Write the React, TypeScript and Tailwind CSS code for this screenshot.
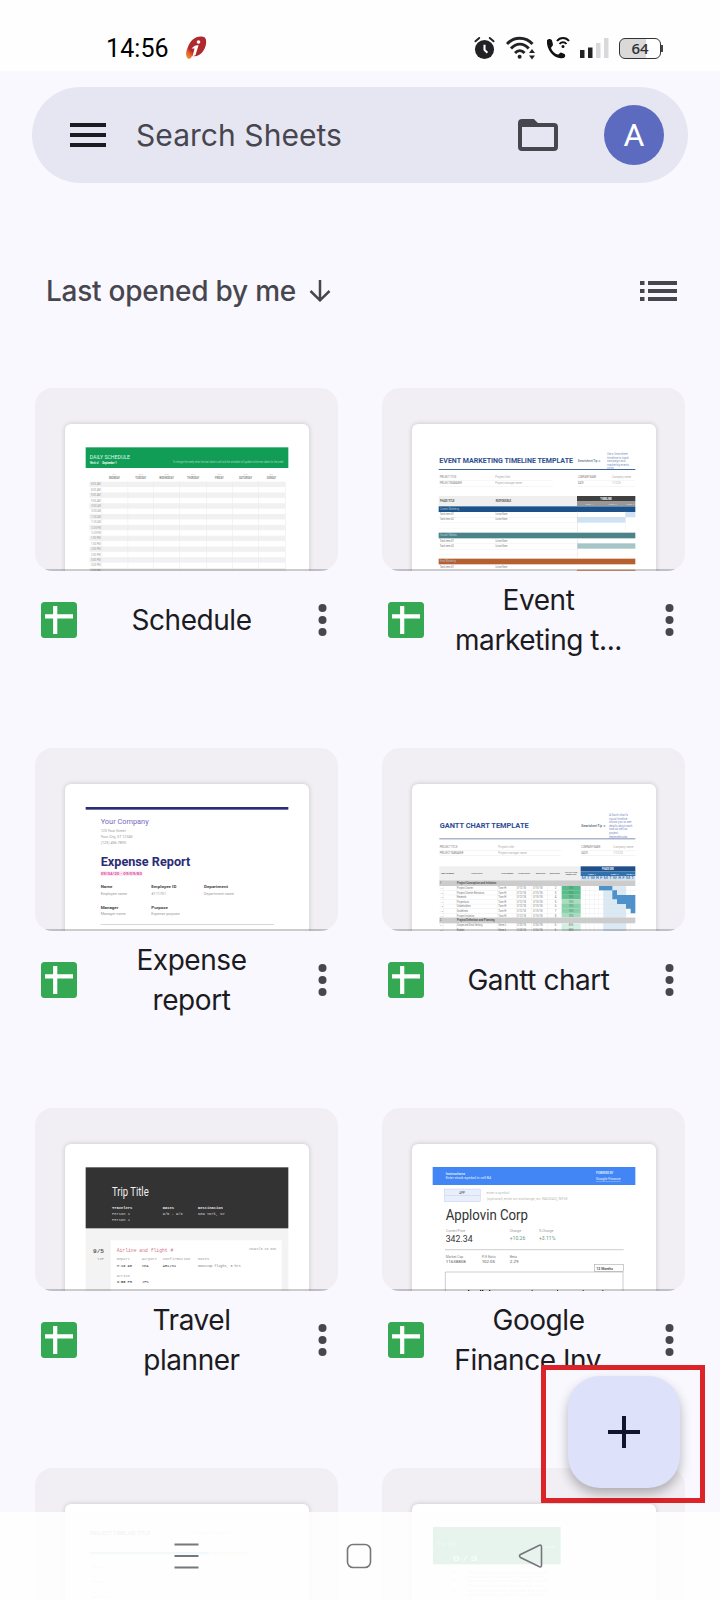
import React from 'react';

type TxProps = {
  x: number;
  y: number;
  w: number;
  s: number;
  fill?: string;
  bold?: boolean;
  mono?: boolean;
  children: React.ReactNode;
};

function Tx({ x, y, w, s, fill = '#777', bold, mono, children }: TxProps) {
  return (
    <text
      x={x}
      y={y}
      textLength={w}
      lengthAdjust="spacingAndGlyphs"
      fontSize={s}
      fill={fill}
      fontWeight={bold ? 700 : 400}
      fontFamily={mono ? 'Liberation Mono, monospace' : 'Roboto, sans-serif'}
    >
      {children}
    </text>
  );
}

const R = (p: { x: number; y: number; w: number; h: number; f: string; o?: number }) => (
  <rect x={p.x} y={p.y} width={p.w} height={p.h} fill={p.f} opacity={p.o} />
);

function ScheduleThumb() {
  const days: [number, number, string][] = [
    [235, 33, 'MONDAY'], [314, 32, 'TUESDAY'], [386, 43, 'WEDNESDAY'], [469, 37, 'THURSDAY'],
    [553, 26, 'FRIDAY'], [625, 39, 'SATURDAY'], [708, 28, 'SUNDAY'],
  ];
  const times = ['8:00 AM', '8:30 AM', '9:00 AM', '9:30 AM', '10:00 AM', '10:30 AM', '11:00 AM', '11:30 AM', '12:00 PM', '12:30 PM', '1:00 PM', '1:30 PM', '2:00 PM', '2:30 PM', '3:00 PM', '3:30 PM', '4:00 PM'];
  return (
    <>
      <R x={165} y={201} w={608} h={62} f="#129d57" />
      <Tx x={177} y={236} w={121} s={15} fill="#d9fae8">DAILY SCHEDULE</Tx>
      <Tx x={178} y={250} w={26} s={8} fill="#d5f5e3" bold>Week of</Tx>
      <Tx x={215} y={250} w={43} s={8} fill="#fff" bold>September 1</Tx>
      <Tx x={426} y={249} w={332} s={8} fill="#9fdcbb">To change the week, enter the start date in cell and the schedule will update to the new dates for the week</Tx>
      {days.map(([x, w, d], i) => (
        <g key={d}>
          <Tx x={x + w / 2 - 6} y={284} w={12} s={6} fill="#aaa">9/{i + 1}</Tx>
          <Tx x={x} y={297} w={w} s={8} fill="#888" bold>{d}</Tx>
        </g>
      ))}
      {times.map((t, i) => (
        <g key={t}>
          {i % 2 === 0 && <R x={176} y={304 + i * 16.2} w={587} h={16} f="#f1f1f1" />}
          <Tx x={181} y={315 + i * 16.2} w={29} s={8} fill="#999">{t}</Tx>
        </g>
      ))}
      {[213, 291, 368, 446, 526, 604, 683, 763].map((x) => <R key={x} x={x} y={304} w={1.5} h={268} f="#e9e9e9" />)}
    </>
  );
}

function EventThumb() {
  return (
    <>
      <Tx x={190} y={249} w={401} s={21} fill="#2f4f8f" bold>EVENT MARKETING TIMELINE TEMPLATE</Tx>
      <Tx x={605} y={244} w={70} s={9} fill="#789" bold>Smartsheet Tip ➜</Tx>
      {['Use a Smartsheet', 'timeline to track', 'campaign and', 'marketing events', 'online'].map((t, i) => (
        <Tx key={t} x={693} y={225 + i * 10.3} w={[62, 65, 55, 66, 20][i]} s={8} fill="#7f92b8">{t}</Tx>
      ))}
      <R x={188} y={266} w={590} h={3} f="#3d6598" />
      <Tx x={191} y={294} w={50} s={8}>PROJECT TITLE</Tx>
      <Tx x={191} y={310} w={66} s={8}>PROJECT MANAGER</Tx>
      <Tx x={358} y={294} w={44} s={8} fill="#aaa">Project title</Tx>
      <Tx x={358} y={310} w={80} s={8} fill="#aaa">Project manager name</Tx>
      <Tx x={606} y={294} w={54} s={8}>COMPANY NAME</Tx>
      <Tx x={606} y={310} w={17} s={8}>DATE</Tx>
      <Tx x={708} y={294} w={57} s={8} fill="#aaa">Company name</Tx>
      <Tx x={708} y={310} w={26} s={8} fill="#aaa">1/12/25</Tx>
      {[300, 317].map((y) => <g key={y}><R x={190} y={y} w={340} h={1} f="#e4e4e4" /><R x={604} y={y} w={172} h={1} f="#e4e4e4" /></g>)}
      <R x={188} y={347} w={415} h={30} f="#efefef" />
      <R x={603} y={347} w={175} h={15} f="#404040" />
      <R x={603} y={362} w={175} h={15} f="#989898" />
      <Tx x={192} y={365} w={43} s={8} fill="#555" bold>PHASE TITLE</Tx>
      <Tx x={359} y={365} w={46} s={8} fill="#555" bold>RESPONSIBLE</Tx>
      <Tx x={673} y={358} w={34} s={8} fill="#fff" bold>TIMELINE</Tx>
      <Tx x={627} y={373} w={25} s={7} fill="#ddd">WEEK 1</Tx>
      <Tx x={697} y={373} w={25} s={7} fill="#ddd">WEEK 2</Tx>
      <Tx x={751} y={373} w={23} s={7} fill="#ddd">WEEK 3</Tx>
      <R x={748} y={394} w={30} h={17} f="#cfe2f3" />
      <R x={603} y={410} w={145} h={17} f="#cfe2f3" />
      <R x={603} y={489} w={175} h={16} f="#a6c5c6" />
      <R x={603} y={568} w={175} h={6} f="#e5a77d" />
      {([[378, 17, '#1c5289', 'Content Marketing', 57], [457, 17, '#4b8488', 'Social Media', 50], [535, 17, '#b66030', 'Email Marketing', 48]] as const).map(([y, h, f, t, w]) => (
        <g key={y}>
          <R x={188} y={y} w={590} h={h} f={f} />
          <Tx x={192} y={y + 11} w={w} s={8} fill="#b4c6da">{t}</Tx>
          <Tx x={191} y={y + 27} w={43} s={8}>Task item #1</Tx>
          <Tx x={358} y={y + 27} w={36} s={8}>Contact Name</Tx>
          {y < 500 && (
            <>
              <Tx x={191} y={y + 42} w={43} s={8}>Task item #2</Tx>
              <Tx x={358} y={y + 42} w={36} s={8}>Contact Name</Tx>
              <R x={188} y={y + 32} w={415} h={1} f="#e6e6e6" />
              <R x={188} y={y + 49} w={415} h={1} f="#e6e6e6" />
              <R x={188} y={y + 65} w={415} h={1} f="#eeeeee" />
            </>
          )}
        </g>
      ))}
      {[[394, 63], [474, 61]].map(([y, h]) => <R key={y} x={603} y={y} w={1.5} h={h} f="#dcdcdc" />)}
      <R x={748} y={394} w={1} h={56} f="#e4e4e4" />
    </>
  );
}

function ExpenseThumb() {
  return (
    <>
      <R x={165} y={200} w={608} h={8} f="#2c2c76" />
      <Tx x={210} y={252} w={144} s={23} fill="#7469bd">Your Company</Tx>
      <Tx x={210} y={274} w={75} s={11} fill="#999">123 Your Street</Tx>
      <Tx x={210} y={292} w={96} s={11} fill="#999">Your City, ST 12345</Tx>
      <Tx x={210} y={311} w={76} s={11} fill="#999">(123) 456-7890</Tx>
      <Tx x={210} y={377} w={269} s={37} fill="#2c2c76" bold>Expense Report</Tx>
      <R x={210} y={393} w={125} h={14} f="#fde8f3" />
      <Tx x={210} y={405} w={124} s={12} fill="#e0559f" bold>09/04/20 - 09/09/80</Tx>
      <Tx x={210} y={444} w={35} s={12} fill="#444" bold>Name</Tx>
      <Tx x={362} y={444} w={75} s={12} fill="#444" bold>Employee ID</Tx>
      <Tx x={520} y={444} w={72} s={12} fill="#444" bold>Department</Tx>
      <Tx x={210} y={464} w={79} s={11} fill="#999">Employee name</Tx>
      <Tx x={362} y={464} w={44} s={11} fill="#999">#111701</Tx>
      <Tx x={520} y={464} w={90} s={11} fill="#999">Department name</Tx>
      <Tx x={210} y={506} w={53} s={12} fill="#444" bold>Manager</Tx>
      <Tx x={362} y={506} w={50} s={12} fill="#444" bold>Purpose</Tx>
      <Tx x={210} y={525} w={75} s={11} fill="#999">Manager name</Tx>
      <Tx x={362} y={525} w={85} s={11} fill="#999">Expense purpose</Tx>
      <R x={210} y={551} w={520} h={2.5} f="#d0d0d0" />
    </>
  );
}

function GanttThumb() {
  const tasks = ['Project Charter', 'Project Charter Revisions', 'Research', 'Projections', 'Stakeholders', 'Guidelines', 'Project Initiation'];
  const tw = [48, 82, 28, 36, 41, 33, 52];
  const g = ['#57bb8a', '#57bb8a', '#65c092', '#a9dcc0', '#8ad1aa', '#8ad1aa', '#a8dcc1'];
  return (
    <>
      <Tx x={191} y={264} w={267} s={23} fill="#2c4d95" bold>GANTT CHART TEMPLATE</Tx>
      <Tx x={616} y={259} w={73} s={9} fill="#678" bold>Smartsheet Tip ➜</Tx>
      {['A Gantt chart’s', 'visual timeline', 'allows you to see', 'details about each', 'task as well as', 'project', 'dependencies'].map((t, i) => (
        <Tx key={t} x={699} y={227 + i * 10.8} w={[57, 55, 67, 70, 55, 27, 55][i]} s={9} fill="#7f90c4">{t}</Tx>
      ))}
      <R x={190} y={294} w={588} h={3} f="#8090b5" />
      <Tx x={191} y={323} w={53} s={8}>PROJECT TITLE</Tx>
      <Tx x={191} y={340} w={71} s={8}>PROJECT MANAGER</Tx>
      <Tx x={367} y={323} w={47} s={8} fill="#aaa">Project's title</Tx>
      <Tx x={367} y={340} w={85} s={8} fill="#aaa">Project manager name</Tx>
      <Tx x={616} y={323} w={57} s={8}>COMPANY NAME</Tx>
      <Tx x={616} y={340} w={19} s={8}>DATE</Tx>
      <Tx x={712} y={323} w={60} s={8} fill="#aaa">Company name</Tx>
      <Tx x={712} y={340} w={28} s={8} fill="#aaa">1/12/25</Tx>
      {[329, 346].map((y) => <g key={y}><R x={190} y={y} w={364} h={1} f="#ddd" /><R x={616} y={y} w={162} h={1} f="#ddd" /></g>)}
      <R x={190} y={378} w={424} h={42} f="#efefef" />
      {([[196, 38, 'WBS NUMBER'], [286, 33, 'TASK TITLE'], [376, 36, 'TASK OWNER'], [427, 35, 'START DATE'], [480, 28, 'DUE DATE'], [521, 30, 'DURATION']] as const).map(([x, w, t]) => (
        <Tx key={t} x={x} y={402} w={w} s={7} fill="#555" bold>{t}</Tx>
      ))}
      <Tx x={567} y={397} w={37} s={7} fill="#555" bold>PCT OF TASK</Tx>
      <Tx x={569} y={405} w={32} s={7} fill="#555" bold>COMPLETE</Tx>
      <R x={614} y={378} w={164} h={15} f="#204e88" />
      <R x={614} y={393} w={164} h={14} f="#3271aa" />
      <R x={614} y={407} w={164} h={13} f="#cfe2f3" />
      <Tx x={678} y={389} w={35} s={8} fill="#fff" bold>PHASE ONE</Tx>
      {[636, 704, 751].map((x, i) => <Tx key={x} x={x} y={403} w={24} s={7} fill="#fff">WEEK {i + 1}</Tx>)}
      <Tx x={617} y={417} w={157} s={8} fill="#2d5e94">M T W R F M T W R F M T</Tx>
      <R x={682} y={437} w={68} h={135} f="#dbe9f5" />
      {tasks.map((t, i) => {
        const y = 447 + i * 13.6;
        return (
          <g key={t}>
            <R x={557} y={y - 11} w={57} h={14} f={g[i]} />
            <Tx x={193} y={y} w={8} s={7}>1.{i + 1}</Tx>
            <Tx x={243} y={y} w={tw[i]} s={8}>{t}</Tx>
            <Tx x={367} y={y} w={26} s={8}>Tom H.</Tx>
            <Tx x={423} y={y} w={27} s={8}>3/12/18</Tx>
            <Tx x={471} y={y} w={28} s={8}>3/15/18</Tx>
            <Tx x={536} y={y} w={5} s={8}>{i + 2}</Tx>
            <Tx x={578} y={y} w={14} s={8} fill="#4f8468">100%</Tx>
            <R x={190} y={y + 3} w={588} h={0.8} f="#dcdcdc" />
          </g>
        );
      })}
      {[628, 641, 655, 668, 682, 696, 709, 723, 736, 750, 764].map((x) => <R key={x} x={x} y={437} w={0.8} h={135} f="#e2e6ea" />)}
      {[203, 240, 364, 420, 467, 514].map((x) => <R key={x} x={x} y={437} w={0.8} h={135} f="#ddd" />)}
      <R x={669} y={437} w={40} h={13} f="#4e91cb" />
      <path d="M709 450h14v14h55v55h-14v-14h-14v-14h-27v-14h-14z" fill="#4e91cb" />
      <R x={190} y={420} w={588} h={17} f="#cccccc" />
      <R x={190} y={532} w={588} h={17} f="#cccccc" />
      <Tx x={192} y={431} w={4} s={8} fill="#333">1</Tx>
      <Tx x={243} y={431} w={118} s={9} fill="#555" bold>Project Conception and Initiation</Tx>
      <Tx x={192} y={543} w={4} s={8} fill="#333">2</Tx>
      <Tx x={243} y={543} w={113} s={9} fill="#555" bold>Project Definition and Planning</Tx>
      {[558, 571].map((y) => (
        <g key={y}>
          <R x={557} y={y - 9} w={57} h={14} f="#d4efe1" />
          <Tx x={193} y={y} w={8} s={7}>2.1</Tx>
          <Tx x={243} y={y} w={y === 558 ? 76 : 22} s={8}>{y === 558 ? 'Scope and Goal Setting' : 'Budget'}</Tx>
          <Tx x={367} y={y} w={26} s={8}>Steve L.</Tx>
          <Tx x={423} y={y} w={27} s={8}>3/20/18</Tx>
          <Tx x={471} y={y} w={28} s={8}>3/26/18</Tx>
          <Tx x={536} y={y} w={5} s={8}>6</Tx>
          <Tx x={578} y={y} w={14} s={8}>80%</Tx>
        </g>
      ))}
    </>
  );
}

function TravelThumb() {
  return (
    <>
      <R x={165} y={384} w={608} h={190} f="#f3f3f3" />
      <R x={165} y={201} w={608} h={183} f="#333333" />
      <Tx x={244} y={286} w={110} s={41} fill="#f2f2f2">Trip Title</Tx>
      <Tx mono bold x={244} y={325} w={61} s={12} fill="#eee">Travelers</Tx>
      <Tx mono x={244} y={344} w={54} s={11} fill="#ddd">Person 1</Tx>
      <Tx mono x={244} y={363} w={54} s={11} fill="#ddd">Person 2</Tx>
      <Tx mono bold x={396} y={325} w={34} s={12} fill="#eee">Dates</Tx>
      <Tx mono x={396} y={344} w={60} s={11} fill="#ddd">9/5 - 9/8</Tx>
      <Tx mono bold x={502} y={325} w={74} s={12} fill="#eee">Destination</Tx>
      <Tx mono x={502} y={344} w={80} s={11} fill="#ddd">New York, NY</Tx>
      <R x={240} y={420} w={513} h={154} f="#ffffff" />
      <Tx mono bold x={187} y={457} w={33} s={18} fill="#555">9/5</Tx>
      <Tx mono x={200} y={479} w={19} s={10} fill="#999">TUE</Tx>
      <Tx mono x={258} y={454} w={170} s={15} fill="#d47688">Airline and flight #</Tx>
      <Tx mono x={655} y={449} w={82} s={10} fill="#888">Seattle to NYC</Tx>
      <Tx mono x={258} y={479} w={40} s={10} fill="#999">Depart</Tx>
      <Tx mono x={333} y={479} w={46} s={10} fill="#999">Airport</Tx>
      <Tx mono x={396} y={479} w={83} s={10} fill="#999">Confirmation</Tx>
      <Tx mono x={502} y={479} w={34} s={10} fill="#999">Notes</Tx>
      <Tx mono bold x={258} y={499} w={46} s={11} fill="#555">7:10 AM</Tx>
      <Tx mono x={333} y={499} w={21} s={11} fill="#444">SEA</Tx>
      <Tx mono x={396} y={499} w={40} s={11} fill="#444">AB1234</Tx>
      <Tx mono x={502} y={499} w={128} s={11} fill="#777">Nonstop flight, 5 hrs</Tx>
      <Tx mono x={258} y={530} w={40} s={10} fill="#999">Arrive</Tx>
      <Tx mono bold x={258} y={549} w={46} s={11} fill="#555">3:55 PM</Tx>
      <Tx mono x={334} y={549} w={20} s={11} fill="#444">JFK</Tx>
    </>
  );
}

function FinanceThumb() {
  return (
    <>
      <R x={170} y={200} w={608} h={54} f="#4285f4" />
      <Tx x={209} y={224} w={58} s={10} fill="#dbe8ff" bold>Instructions</Tx>
      <Tx x={209} y={237} w={136} s={10} fill="#e6efff">Enter stock symbol in cell B4</Tx>
      <Tx x={660} y={221} w={52} s={9} fill="#dbe8ff" bold>POWERED BY</Tx>
      <Tx x={660} y={240} w={74} s={11} fill="#e6efff">Google Finance</Tx>
      <R x={660} y={242} w={74} h={1} f="#dbe8ff" />
      <rect x={205} y={266} width={108} height={38} fill="#e8eefb" stroke="#b0bedf" />
      <R x={205} y={285} w={108} h={1} f="#b0bedf" />
      <Tx x={250} y={281} w={17} s={9} fill="#444">APP</Tx>
      <Tx x={318} y={280} w={82} s={9} fill="#bbb">← enter a symbol</Tx>
      <Tx x={318} y={298} w={257} s={9} fill="#bbb">← (optional) enter an exchange, ex: NASDAQ, NYSE</Tx>
      <Tx x={209} y={359} w={247} s={43} fill="#333">Applovin Corp</Tx>
      <Tx x={210} y={394} w={57} s={9} fill="#999">Current Price</Tx>
      <Tx x={401} y={394} w={34} s={9} fill="#999">Change</Tx>
      <Tx x={489} y={394} w={43} s={9} fill="#999">% Change</Tx>
      <Tx x={209} y={425} w={81} s={28} fill="#333">342.34</Tx>
      <Tx x={401} y={420} w={47} s={14} fill="#6b9a7d">+10.26</Tx>
      <Tx x={489} y={420} w={49} s={14} fill="#6b9a7d">+3.11%</Tx>
      <R x={207} y={447} w={536} h={2.5} f="#c4c4c4" />
      <Tx x={209} y={472} w={53} s={9} fill="#888">Market Cap</Tx>
      <Tx x={317} y={472} w={42} s={9} fill="#888">P/E Ratio</Tx>
      <Tx x={401} y={472} w={22} s={9} fill="#888">Beta</Tx>
      <Tx x={209} y={489} w={60} s={13} fill="#555">11638808</Tx>
      <Tx x={317} y={489} w={40} s={13} fill="#555">102.05</Tx>
      <Tx x={401} y={489} w={27} s={13} fill="#555">2.29</Tx>
      <rect x={655} y={493} width={88} height={21} fill="#fff" stroke="#999" strokeWidth={1.5} />
      <Tx x={661} y={508} w={50} s={11} fill="#555" bold>12 Months</Tx>
      <path d="M208 575V515H741V575" fill="none" stroke="#999" strokeWidth={1.5} />
      {[276, 312, 318, 339, 467, 543, 620, 679].map((x, i) => <R key={x} x={x} y={569} w={i < 4 ? 4 : 3} h={6} f="#333" />)}
    </>
  );
}

function TimelineThumb() {
  return (
    <>
      <Tx x={178} y={223} w={180} s={15} fill="#999" bold>PROJECT TIMELINE TITLE</Tx>
      <Tx x={475} y={221} w={130} s={12} fill="#ccc">Company name</Tx>
      <R x={178} y={275} w={237} h={7} f="#a9cdd6" />
      <R x={415} y={275} w={120} h={7} f="#8dbfe0" />
      <R x={535} y={275} w={118} h={7} f="#f0dcc0" />
      {[305, 350, 395].map((y) => (
        <g key={y}><R x={178} y={y} w={475} h={2} f="#e6e6e6" /><Tx x={178} y={y + 18} w={50} s={11} fill="#ccc">Task item</Tx></g>
      ))}
      {[440, 510, 580].map((x) => <R key={x} x={x} y={283} w={2} h={150} f="#e6e6e6" />)}
    </>
  );
}

function ListThumb() {
  return (
    <>
      <R x={171} y={200} w={383} h={112} f="#129d57" />
      <Tx x={181} y={256} w={64} s={24} fill="#63bd8e">To-do</Tx>
      <Tx x={230} y={302} w={75} s={22} fill="#a8e0c2" bold>0 / 3</Tx>
      <Tx x={470} y={262} w={65} s={10} fill="#8fd5ab">completed</Tx>
      {[340, 366, 394].map((y) => (
        <g key={y}>
          <rect x={186} y={y - 10} width={12} height={12} fill="none" stroke="#ccc" />
          <Tx x={227} y={y} w={12} s={10} fill="#bbb">9/5</Tx>
          <Tx x={273} y={y} w={240} s={11} fill="#bbb">Task description to complete this week</Tx>
          <Tx x={273} y={y + 13} w={230} s={11} fill="#ccc">Additional notes about this task item</Tx>
        </g>
      ))}
    </>
  );
}

function SheetIcon() {
  return (
    <svg className="h-9 w-9 shrink-0" viewBox="0 0 36 36">
      <rect width="36" height="36" rx="3.5" fill="#34a853" />
      <path d="M4 14.400h28M14.200 4v28" stroke="#fff" strokeWidth="4.200" />
    </svg>
  );
}

function FileCard({ lines = [], thumb, right }: { lines?: string[]; thumb: React.ReactNode; right?: boolean }) {
  return (
    <article className="flex h-[360px] flex-col">
      <div className="relative flex h-[183px] shrink-0 justify-center overflow-hidden rounded-[18px] bg-[#f1eff4] pt-[36px]">
        <div className="h-[160px] w-[244px] rounded-t-[6px] bg-white shadow-[0_0_5px_rgba(0,0,0,0.18)]">
          <svg className="block h-[147px] w-[244px]" viewBox={right ? '108 131 732 441' : '103 131 732 441'}>{thumb}</svg>
        </div>
        <div className="absolute inset-x-0 bottom-0 h-[2px] bg-black/20" />
      </div>
      {lines.length > 0 && (
        <div className="flex h-[98px] items-center pl-[6px] pr-[11px]">
          <SheetIcon />
          <h2 className="min-w-0 flex-1 whitespace-nowrap pr-[12px] text-center font-[Inter,sans-serif] text-[28px] font-normal leading-[40px] tracking-[-0.45px] text-[#1b1b21]">
            {lines.map((l) => <span key={l} className="block">{l}</span>)}
          </h2>
          <svg className="h-8 w-[9px] shrink-0" viewBox="0 0 9 32" fill="#47464f">
            <circle cx="4.500" cy="4" r="4" /><circle cx="4.500" cy="16" r="4" /><circle cx="4.500" cy="28" r="4" />
          </svg>
        </div>
      )}
    </article>
  );
}

function StatusBar() {
  return (
    <div className="flex h-[71px] shrink-0 items-center bg-[#fefefe] pl-[106px] pr-[57px] pt-[25px]">
      <span className="w-[64px] whitespace-nowrap font-[Roboto,sans-serif] text-[25px] leading-none tracking-[0.1px] text-black">14:56</span>
      <svg className="ml-[15px] h-[24px] w-[22px]" viewBox="0 0 22 24">
        <defs>
          <linearGradient id="brand" x1="0" y1="1" x2="0.6" y2="0.3">
            <stop offset="0" stopColor="#f6a02d" /><stop offset="0.3" stopColor="#e8602c" /><stop offset="0.5" stopColor="#ae282e" />
          </linearGradient>
        </defs>
        <path d="M18 .8C12-1 5 4 3 11C1 15 0 20 3 22.500C5 23.500 6 22 7 20C14 22 20 15 21 8C21.500 4 21 1.500 18 .8Z" fill="url(#brand)" />
        <circle cx="13.500" cy="6" r="1.800" fill="#fff" />
        <path d="M6.500 12.500C9 9.500 12 8.500 13.500 9.500L10.500 19L7.500 20.500L9.500 12.500Z" fill="#fff" />
      </svg>
      <div className="ml-auto flex items-center">
        <svg className="h-6 w-[21px]" viewBox="0 0 22 24">
          <circle cx="11" cy="13.500" r="10" fill="#222226" />
          <path d="M1.500 5L5.500 1.500M20.500 5L16.500 1.500" stroke="#222226" strokeWidth="2" strokeLinecap="round" />
          <path d="M11 8.500v5.500l3 3" stroke="#fff" strokeWidth="2.200" fill="none" />
        </svg>
        <svg className="ml-[11px] h-6 w-[30px]" viewBox="0 0 30 24">
          <g fill="none" stroke="#222226" strokeWidth="2.900">
            <path d="M1 8C8 .3 19.500.3 26.500 8" /><path d="M5 12.500C10.300 6.700 17.500 6.700 22.700 12.500" /><path d="M9 17C12 13.800 15.700 13.800 18.500 17" />
          </g>
          <circle cx="13.600" cy="20.700" r="2" fill="#222226" />
          <path d="M23 17L26 13L29 17ZM23 19.500L26 23.500L29 19.500Z" fill="#222226" />
        </svg>
        <svg className="ml-[10px] h-6 w-[24px]" viewBox="0 0 24 24">
          <path d="M1 4.500C2 2.500 5 2.500 6 4.500L7 8.500C7 10 5 11 5 12C6 15 9 18 12 18.500C13 18.500 14 16.500 15 16.500L18.500 18C20 19.500 19 22 17 22C9 24 0 14 1 4.500Z" fill="#111" />
          <g fill="none" stroke="#111" strokeWidth="2"><path d="M11 5C14 1 20 1 23 5" /><path d="M13.500 8C15.500 5.500 18.500 5.500 20.500 8" /></g>
          <circle cx="17" cy="10.500" r="1.500" fill="#111" />
        </svg>
        <svg className="ml-[10px] h-6 w-[29px]" viewBox="0 0 29 24">
          <rect x="0" y="14" width="4.500" height="8" fill="#222" /><rect x="8" y="11.500" width="4.500" height="10.500" fill="#222" />
          <rect x="16" y="7" width="4.500" height="15" fill="#d9d9dc" /><rect x="24" y="2" width="4.500" height="20" fill="#d9d9dc" />
        </svg>
        <div className="ml-[10px] flex h-[21px] w-[42px] items-center justify-center overflow-hidden rounded-[6px] border-[1.5px] border-[#333] bg-[linear-gradient(to_right,#d9d9d9_64%,#fff_64%)] font-['Open_Sans',sans-serif] text-[15px] font-semibold leading-none text-[#333]">64</div>
        <div className="h-[7px] w-[2px] bg-[#444]" />
      </div>
    </div>
  );
}

export default function App() {
  return (
    <div className="relative flex h-[1600px] w-[720px] flex-col overflow-hidden bg-[#f9f8fe]">
      <StatusBar />
      <header className="mx-8 mt-4 flex h-24 shrink-0 items-center rounded-full bg-[#e6e6f2] pl-[38px] pr-[24px]">
        <svg className="h-6 w-9" viewBox="0 0 36 24"><path d="M0 2h36M0 12h36M0 22h36" stroke="#1b1b21" strokeWidth="4" /></svg>
        <span className="ml-[30px] whitespace-nowrap font-[Inter,sans-serif] text-[30px] leading-none tracking-[0.05px] text-[#47464f]">Search Sheets</span>
        <svg className="ml-auto h-8 w-10" viewBox="0 0 40 32">
          <path d="M2 28V4Q2 2 4 2H15L19 6H36Q38 6 38 8V28Q38 30 36 30H4Q2 30 2 28Z" fill="none" stroke="#47464f" strokeWidth="4" />
          <path d="M2 2h13l4 6H2z" fill="#47464f" />
        </svg>
        <div className="ml-[46px] flex h-[60px] w-[60px] items-center justify-center rounded-full bg-[#5c6bc0] font-[Roboto,sans-serif] text-[32px] leading-none text-white">A</div>
      </header>
      <div className="mt-[76px] flex h-16 shrink-0 items-center pl-[46px] pr-[43px] text-[#47464f]">
        <span className="whitespace-nowrap font-[Inter,sans-serif] text-[28px] font-medium leading-none tracking-[-0.25px]">Last opened by me</span>
        <svg className="ml-[13px] h-[22px] w-[22px]" viewBox="0 0 22 22"><path d="M11 0v20M1.500 11L11 20.300L20.500 11" fill="none" stroke="currentColor" strokeWidth="2.500" /></svg>
        <svg className="ml-auto h-[22px] w-[37px]" viewBox="0 0 37 22"><path d="M0 3h4.500M8 3h29M0 11h4.500M8 11h29M0 19h4.500M8 19h29" stroke="currentColor" strokeWidth="4" /></svg>
      </div>
      <main className="ml-[35px] mt-[65px] grid shrink-0 grid-cols-[303px_303px] gap-x-[44px]">
        <FileCard lines={['Schedule']} thumb={<ScheduleThumb />} />
        <FileCard right lines={['Event', 'marketing t...']} thumb={<EventThumb />} />
        <FileCard lines={['Expense', 'report']} thumb={<ExpenseThumb />} />
        <FileCard right lines={['Gantt chart']} thumb={<GanttThumb />} />
        <FileCard lines={['Travel', 'planner']} thumb={<TravelThumb />} />
        <FileCard right lines={['Google', 'Finance Inv...']} thumb={<FinanceThumb />} />
        <FileCard thumb={<TimelineThumb />} />
        <FileCard right thumb={<ListThumb />} />
      </main>
      <div className="absolute left-[541px] top-[1365px] flex h-[138px] w-[164px] items-center justify-center border-[5px] border-[#dc2328]">
        <div className="ml-[2px] mt-[-4px] flex h-28 w-28 items-center justify-center rounded-[32px] bg-[#dde1fa] shadow-[0_6px_12px_rgba(0,0,0,0.28)]">
          <svg className="h-8 w-8" viewBox="0 0 32 32"><path d="M0 16h32M16 0v32" stroke="#11142c" strokeWidth="4" /></svg>
        </div>
      </div>
      <nav className="absolute inset-x-0 bottom-0 flex h-[88px] items-center bg-[#fefefe]/90 pl-[174px]">
        <svg className="h-[26px] w-[25px]" viewBox="0 0 25 26"><path d="M.500 1.500h24M.500 13h24M.500 24.500h24" stroke="#77777b" strokeWidth="2" /></svg>
        <svg className="ml-[147px] h-[26px] w-[26px]" viewBox="0 0 26 26"><rect x="1.500" y="1.500" width="23" height="23" rx="5.500" fill="none" stroke="#77777b" strokeWidth="1.600" /></svg>
        <svg className="ml-[146px] h-[26px] w-[26px]" viewBox="0 0 26 26"><path d="M21.500 2.200L2.500 11.500Q.500 13 2.500 14.500L21.500 23.800Q23.500 24.500 23.500 22V4Q23.500 1.500 21.500 2.200Z" fill="none" stroke="#77777b" strokeWidth="1.600" /></svg>
      </nav>
    </div>
  );
}
